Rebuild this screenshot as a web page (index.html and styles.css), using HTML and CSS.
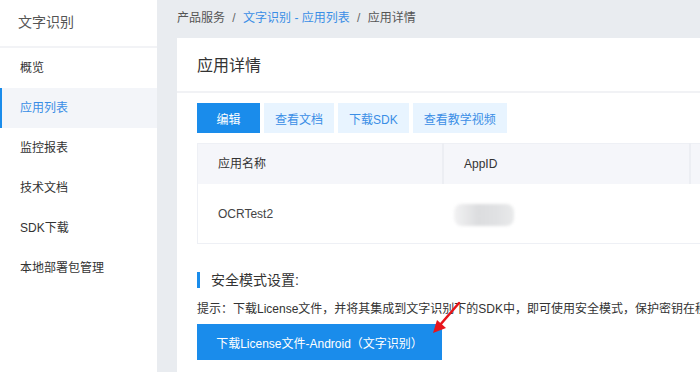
FILE: index.html
```html
<!DOCTYPE html>
<html lang="zh-CN">
<head>
  <meta charset="UTF-8" />
  <title>应用详情 - 文字识别</title>
  <link rel="stylesheet" href="styles.css">
</head>
<body>
  <aside class="sidebar">
    <div class="sidebar-title">文字识别</div>
    <ul class="menu">
      <li>概览</li>
      <li class="active">应用列表</li>
      <li>监控报表</li>
      <li>技术文档</li>
      <li>SDK下载</li>
      <li>本地部署包管理</li>
    </ul>
  </aside>

  <main>
    <div class="breadcrumb">
      <span>产品服务</span>
      <span class="sep">/</span>
      <a href="#">文字识别 - 应用列表</a>
      <span class="sep">/</span>
      <span>应用详情</span>
    </div>

    <div class="card">
      <div class="card-header">应用详情</div>
      <div class="card-body">
        <div class="toolbar">
          <button class="btn primary">编辑</button>
          <button class="btn light">查看文档</button>
          <button class="btn light">下载SDK</button>
          <button class="btn light">查看教学视频</button>
        </div>

        <table class="info-table">
          <tr>
            <th>应用名称</th>
            <th>AppID</th>
            <th></th>
          </tr>
          <tr>
            <td>OCRTest2</td>
            <td><span class="masked"></span></td>
            <td></td>
          </tr>
        </table>

        <h3 class="section-title">安全模式设置:</h3>
        <p class="hint">提示：下载License文件，并将其集成到文字识别下的SDK中，即可使用安全模式，保护密钥在移动端的安全。</p>
        <div class="license">
          <button class="btn primary big">下载License文件-Android（文字识别）</button>
          <svg class="arrow" width="40" height="40" viewBox="0 0 40 40">
            <line x1="32" y1="3" x2="13" y2="25" stroke="#e8151b" stroke-width="2.5" stroke-linecap="round" />
            <polygon points="6,33 10,20 19,28" fill="#e8151b" />
          </svg>
        </div>
      </div>
    </div>
  </main>
</body>
</html>
```

FILE: styles.css
```css
body {
  margin: 0;
  font-family: "Liberation Sans", "Noto Sans CJK SC", sans-serif;
  font-size: 12px;
  line-height: 18px;
  color: #333;
  background-color: #e9ecf0;
  display: flex;
  height: 372px;
  overflow: hidden;
}

.sidebar {
  width: 157px;
  flex-shrink: 0;
  background-color: white;
}

.sidebar-title {
  height: 46px;
  line-height: 44px;
  padding-left: 18px;
  font-size: 14px;
  color: #555;
  border-bottom: 2px solid #f2f3f6;
}

.menu {
  list-style: none;
  margin: 0;
  padding: 0;
}

.menu li {
  height: 40px;
  line-height: 40px;
  padding-left: 18px;
  color: #333;
  border-left: 2px solid transparent;
}

.menu li.active {
  background-color: #f3f5f9;
  border-left-color: #1a8ceb;
  color: #3a8ee6;
}

main {
  flex-grow: 1;
  padding-left: 20px;
  min-width: 0;
}

.breadcrumb {
  height: 38px;
  line-height: 36px;
  color: #555;
}

.breadcrumb a {
  color: #3a8ee6;
  text-decoration: none;
}

.breadcrumb .sep {
  margin: 0 4px;
  color: #666;
}

.card {
  background-color: white;
  width: 640px;
}

.card-header {
  height: 53px;
  line-height: 56px;
  padding-left: 20px;
  font-size: 16px;
  color: #333;
  border-bottom: 2px solid #f1f2f5;
}

.card-body {
  padding: 10px 20px 20px;
}

.toolbar {
  display: flex;
  gap: 4px;
}

.btn {
  font-family: inherit;
  font-size: 12px;
  border: none;
  height: 30px;
  padding: 0 11px;
  cursor: pointer;
}

.btn.primary {
  background-color: #1a8ceb;
  color: white;
  width: 63px;
}

.btn.light {
  background-color: #e8f4ff;
  color: #3a8ee6;
}

.info-table {
  margin-top: 10px;
  width: 620px;
  border-collapse: collapse;
  border: 1px solid #eef0f5;
  table-layout: fixed;
}

.info-table th {
  height: 40px;
  background-color: #f5f6fa;
  font-weight: normal;
  text-align: left;
  padding: 0 0 0 20px;
  color: #333;
  border-right: 2px solid #eceef3;
}

.info-table th:first-child {
  width: 224px;
}

.info-table th:nth-child(2) {
  width: 225px;
}

.info-table td {
  height: 59px;
  padding: 0 0 0 20px;
  color: #444;
}

.masked {
  display: block;
  width: 60px;
  height: 22px;
  margin-left: -9px;
  margin-top: 2px;
  border-radius: 8px;
  background: linear-gradient(to right, #f2f2f3, #dcdddf 40%, #e0e1e3 70%, #e9eaeb);
  filter: blur(1.5px);
}

.section-title {
  margin: 28px 0 0;
  height: 16px;
  line-height: 16px;
  font-size: 14px;
  font-weight: normal;
  color: #333;
  border-left: 3px solid #1a8ceb;
  padding-left: 11px;
}

.hint {
  margin: 12px 0 0;
  white-space: nowrap;
  color: #333;
}

.license {
  position: relative;
  margin-top: 6px;
}

.btn.big {
  width: 245px;
  height: 36px;
  padding: 0;
}

.arrow {
  position: absolute;
  left: 230px;
  top: -24px;
}
```
